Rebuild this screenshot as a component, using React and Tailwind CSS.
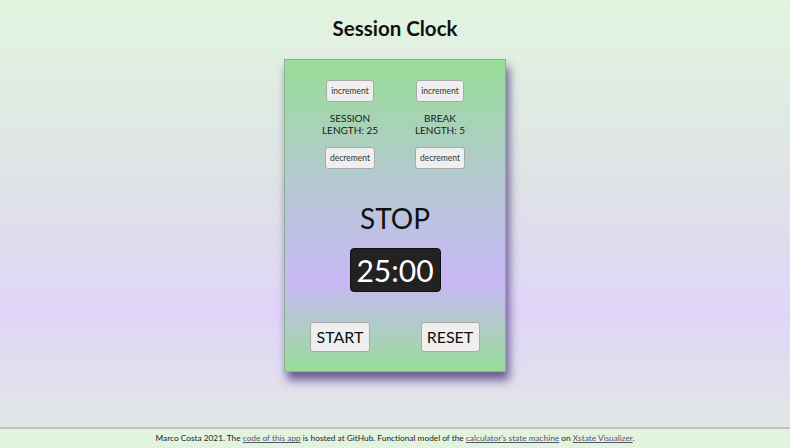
import React, { useState } from 'react';

function SmallButton({ children, onClick }) {
  return (
    <button
      onClick={onClick}
      className="h-[22px] px-[4px] bg-[#efefef] border border-[#a9a9a9] rounded-[3px] text-[8.5px] text-[#333] leading-none"
    >
      {children}
    </button>
  );
}

function LengthControl({ label, value, onInc, onDec }) {
  return (
    <div className="flex flex-col items-center">
      <SmallButton onClick={onInc}>increment</SmallButton>
      <div className="mt-[10px] text-[10px] leading-[12px] text-[#1a1a1a] text-center uppercase">
        <div>{label}</div>
        <div>length: {value}</div>
      </div>
      <div className="mt-[11px] flex">
        <SmallButton onClick={onDec}>decrement</SmallButton>
      </div>
    </div>
  );
}

function App() {
  const [session, setSession] = useState(25);
  const [breakLen, setBreakLen] = useState(5);

  return (
    <div
      className="w-full h-[448px] flex flex-col bg-[linear-gradient(to_bottom,#e2f5e0_0%,#dfe3e6_40%,#e0d5f8_70%,#e2ebe2_100%)]"
      style={{ fontFamily: 'Lato, "Open Sans", sans-serif' }}
    >
      <div className="flex-1 flex flex-col items-center">
        <h1 className="pt-[14px] text-[20.5px] leading-[28px] font-bold text-[#111]">Session Clock</h1>

        {/* clock card */}
        <div className="mt-[17px] w-[222px] h-[313px] flex flex-col border border-[#8fb08f] bg-[linear-gradient(to_bottom,#98de98_0%,#b5c8d2_40%,#c8b8f6_71%,#98de98_100%)] shadow-[3px_8px_9px_rgba(65,45,115,0.75)]">
          <div className="pt-[20px] px-[20px] grid grid-cols-2">
            <LengthControl
              label="session"
              value={session}
              onInc={() => setSession(s => s + 1)}
              onDec={() => setSession(s => Math.max(1, s - 1))}
            />
            <LengthControl
              label="break"
              value={breakLen}
              onInc={() => setBreakLen(b => b + 1)}
              onDec={() => setBreakLen(b => Math.max(1, b - 1))}
            />
          </div>

          <div className="mt-[32px] text-[28px] leading-[34px] text-center text-[#111]">STOP</div>

          <div className="mt-[13px] flex justify-center">
            <div className="w-[91px] h-[44px] flex items-center justify-center bg-[#222] border border-[#111] rounded-[4px] text-white text-[30px] leading-none">
              {String(session).padStart(2, '0')}:00
            </div>
          </div>

          <div className="mt-[30px] grid grid-cols-2">
            <div className="flex justify-center">
              <button className="h-[30px] w-[60px] bg-[#efefef] border border-[#a9a9a9] rounded-[3px] text-[16px] text-[#111]">START</button>
            </div>
            <div className="flex justify-center">
              <button className="h-[30px] w-[59px] bg-[#efefef] border border-[#a9a9a9] rounded-[3px] text-[16px] text-[#111]">RESET</button>
            </div>
          </div>
        </div>
      </div>

      {/* Footer */}
      <footer className="h-[21px] border-t-2 border-[#bcc4bc] bg-[#e2f3e0] flex items-center justify-center text-[8.3px] text-[#222]">
        <span>
          Marco Costa 2021. The <a href="#" className="underline text-[#55556a]">code of this app</a> is hosted at GitHub. Functional model of the{' '}
          <a href="#" className="underline text-[#55556a]">calculator's state machine</a> on{' '}
          <a href="#" className="underline text-[#55556a]">Xstate Visualizer</a>.
        </span>
      </footer>
    </div>
  );
}

export default App;
